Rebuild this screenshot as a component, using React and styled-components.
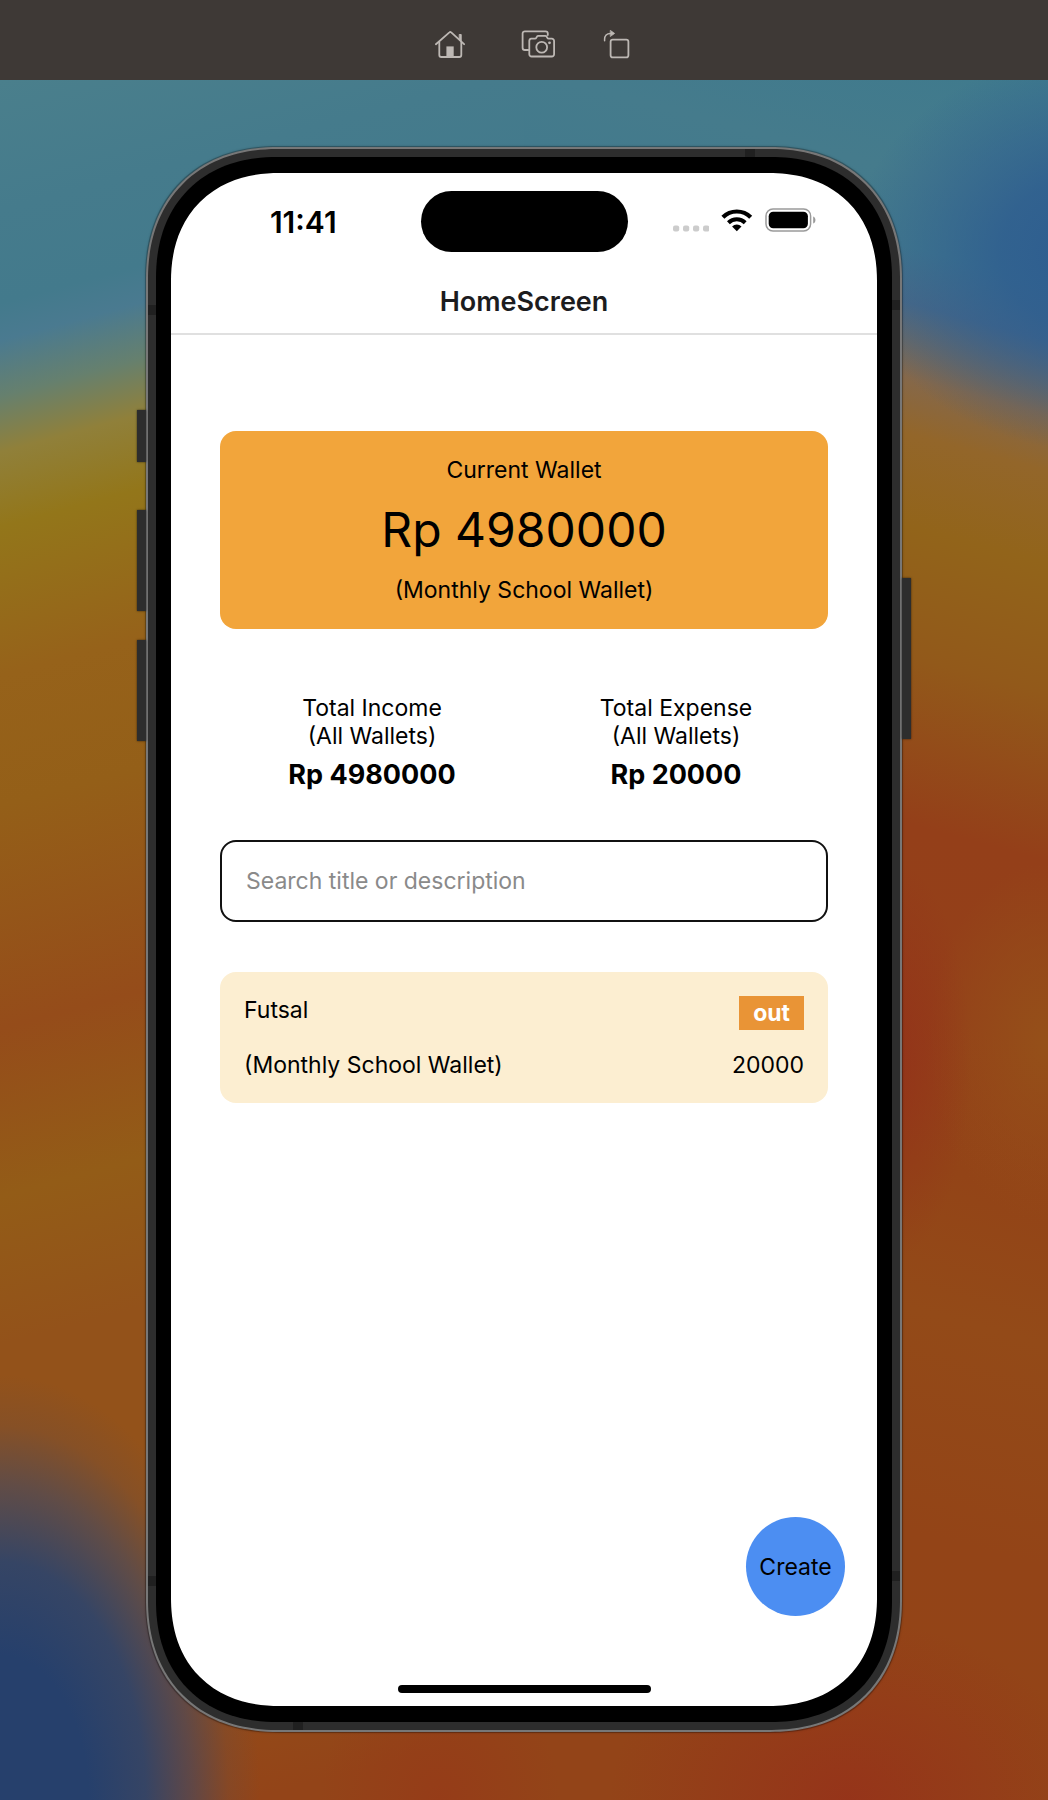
import React, { useState } from "react";
import styled, { createGlobalStyle } from "styled-components";

const GlobalStyle = createGlobalStyle`
  *, *::before, *::after { box-sizing: border-box; }
  body { margin: 0; background: #3e3936; }
  body, button, input { font-family: Inter, "Liberation Sans", Arial, sans-serif; }
`;

const Page = styled.div`
  min-height: 100vh;
  display: flex;
  flex-direction: column;
`;

/* ---------- simulator toolbar ---------- */

const Toolbar = styled.header`
  height: 80px;
  padding: 8px 0 0 10px;
  display: grid;
  grid-template-columns: 88px 88px 70px;
  justify-content: center;
  background: #3e3936;
`;

const ToolButton = styled.button`
  display: flex;
  align-items: center;
  justify-content: center;
  padding: 0;
  border: 0;
  background: none;
  color: #bdb8b4;
  cursor: pointer;
`;

/* ---------- desktop and device ---------- */

const Desktop = styled.main`
  flex: 1;
  display: flex;
  justify-content: center;
  align-items: flex-start;
  padding: 67px 24px;
  background:
    radial-gradient(ellipse 260px 425px at 0 100%, #26406c 0%, #26406c 34%, #2f446aee 56%, #3f486499 74%, #6a4c4050 88%, #93501a00 100%),
    radial-gradient(ellipse 80px 200px at 85% 57%, #93301acc 0%, #93301a00 100%),
    radial-gradient(ellipse 240px 180px at 81% 100%, #96301acc 0%, #96301a00 100%),
    radial-gradient(ellipse 120px 140px at 42% 100%, #963a18cc 0%, #963a1800 100%),
    radial-gradient(ellipse 120px 180px at 100% 56%, #955019 0%, #95501900 100%),
    radial-gradient(ellipse 250px 200px at 105% 10%, #2d5c90 0%, #2d5c90cc 40%, #2d5c9000 100%),
    linear-gradient(165deg, #4a7f8c 0%, #457b8c 7%, #437a8c 12%, #4a7a90 14%, #66806e 17%, #90803a 20%, #93761a 24%, #96621a 32%, #945f18 39%, #954c1a 51%, #935c17 60%, #93521a 68%, #93521a 84%, #934418 96%) left / 50% 100% no-repeat,
    linear-gradient(195deg, #3f7a8d 0%, #457b8c 7%, #437a8c 11%, #4a6a86 14%, #85684a 18%, #93662a 21%, #92641a 26%, #92591a 33%, #943f19 42%, #944019 52%, #934417 60%, #934a18 68%, #934417 80%, #934418 96%) right / 50% 100% no-repeat,
    #935018;
`;

const Device = styled.div`
  position: relative;
  width: 100%;
  max-width: 756px;
  padding: 8px;
  border: 2px solid #777;
  border-radius: 120px;
  background: #2d2d2d;
  box-shadow: 0 0 0 1px rgba(0, 0, 0, 0.2), 0 0 3px rgba(0, 0, 0, 0.4);
  @supports (corner-shape: squircle) {
    corner-shape: superellipse(1.15);
    border-radius: 132px;
  }
`;

const Bezel = styled.div`
  padding: 16px 15px;
  border-radius: 110px;
  background: #000;
  @supports (corner-shape: squircle) {
    corner-shape: superellipse(1.15);
    border-radius: 121px;
  }
`;

const SideKey = styled.span`
  position: absolute;
  top: ${(p) => p.$top}px;
  ${(p) => p.$side}: -11px;
  width: 9px;
  height: ${(p) => p.$length}px;
  background: #2d2d2d;
  box-shadow: 0 0 2px rgba(0, 0, 0, 0.6);
`;

const SideBand = styled.span`
  position: absolute;
  top: ${(p) => p.$top}px;
  ${(p) => p.$side}: 0;
  width: 8px;
  height: 10px;
  background: #202020;
`;

const EndBand = styled.span`
  position: absolute;
  ${(p) => p.$edge}: 0;
  ${(p) => p.$side}: 145px;
  width: 10px;
  height: 8px;
  background: #202020;
`;

const Screen = styled.div`
  display: flex;
  flex-direction: column;
  aspect-ratio: 706 / 1533;
  border-radius: 96px;
  background: #fff;
  color: #000;
  @supports (corner-shape: squircle) {
    corner-shape: superellipse(1.15);
    border-radius: 108px;
  }
`;

const StatusBar = styled.div`
  display: grid;
  grid-template-columns: 1fr 207px 1fr;
  align-items: center;
  justify-items: center;
  padding: 18px 15px 0;
`;

const Clock = styled.time`
  font-size: 30px;
  line-height: 34px;
  font-weight: 600;
`;

const Island = styled.div`
  width: 100%;
  height: 61px;
  border-radius: 31px;
  background: #000;
`;

const Indicators = styled.div`
  display: flex;
  align-items: center;
  gap: 12px;
  padding-bottom: 4px;
`;

const NavBar = styled.header`
  padding: 33px 16px 14px;
  border-bottom: 2px solid #e0e0e0;
  text-align: center;
`;

const NavTitle = styled.h1`
  margin: 0;
  font-size: 27px;
  line-height: 34px;
  font-weight: 600;
  color: #1c1c1e;
`;

/* ---------- app content ---------- */

const Content = styled.div`
  flex: 1;
  display: flex;
  flex-direction: column;
  padding: 96px 49px 0;
`;

const Text = styled.p`
  margin: 0;
  font-size: 23px;
  line-height: 28px;
`;

const WalletCard = styled.section`
  display: flex;
  flex-direction: column;
  align-items: center;
  gap: 17px;
  padding: 25px 24px;
  border-radius: 16px;
  background: #f2a53b;
`;

const Balance = styled.p`
  margin: 0;
  font-size: 48px;
  line-height: 58px;
`;

const Totals = styled.section`
  display: grid;
  grid-template-columns: 1fr 1fr;
  margin-top: 65px;
  text-align: center;
`;

const TotalAmount = styled.p`
  margin: 8px 0 0;
  font-size: 27px;
  line-height: 34px;
  font-weight: 700;
`;

const SearchField = styled.input`
  width: 100%;
  height: 82px;
  margin: 48px 0 50px;
  padding: 0 24px;
  border: 2px solid #111;
  border-radius: 16px;
  background: #fff;
  font-size: 23px;
  line-height: 28px;
  &::placeholder { color: #8a8a8a; opacity: 1; }
`;

const Entry = styled.article`
  display: flex;
  flex-direction: column;
  gap: 21px;
  padding: 24px;
  border-radius: 16px;
  background: #fceed1;
`;

const EntryRow = styled.div`
  display: flex;
  align-items: flex-start;
  justify-content: space-between;
`;

const Badge = styled.span`
  padding: 3px 14px;
  background: #e99436;
  color: #fff;
  font-size: 23px;
  line-height: 28px;
  font-weight: 700;
`;

const ScreenFooter = styled.footer`
  display: flex;
  flex-direction: column;
  align-items: center;
  gap: 69px;
  padding: 0 32px 13px;
`;

const CreateButton = styled.button`
  align-self: flex-end;
  width: 99px;
  height: 99px;
  padding: 0;
  border: 0;
  border-radius: 50%;
  background: #4c8ef2;
  color: #000;
  font-size: 23px;
  line-height: 28px;
  cursor: pointer;
`;

const HomeIndicator = styled.div`
  width: 253px;
  height: 8px;
  border-radius: 4px;
  background: #000;
`;

/* ---------- icons ---------- */

const HomeIcon = () => (
  <svg width="30" height="27" viewBox="0 0 30 27" fill="none" stroke="currentColor" strokeWidth="1.8" strokeLinecap="round" strokeLinejoin="round" aria-hidden="true">
    <path d="M.9 13.2 14.4 1.4a1.3 1.3 0 0 1 1.8 0L29.1 13.2" />
    <path d="M4.3 11v13a2 2 0 0 0 2 2h18a2 2 0 0 0 2-2V11" />
    <path d="M24.6 3.5h1.6v7l-1.6-1.6z" fill="currentColor" strokeWidth="1" />
    <path d="M11.4 15.4h7.3V26h-7.3z" fill="currentColor" stroke="none" />
  </svg>
);

const ScreenshotIcon = () => (
  <svg width="34" height="28" viewBox="0 0 34 28" fill="none" stroke="currentColor" strokeWidth="1.8" strokeLinecap="round" strokeLinejoin="round" aria-hidden="true">
    <path d="M7.4 20H3.9a2.3 2.3 0 0 1-2.3-2.3V3.6a2.3 2.3 0 0 1 2.3-2.3h20.6a2.3 2.3 0 0 1 2.3 2.3V5" />
    <path d="M10.3 8.6h3.6c.8 0 1.2-.4 1.5-1l.5-.9c.3-.6.8-.9 1.5-.9h6.8c.7 0 1.2.3 1.5.9l.5.9c.3.6.7 1 1.5 1h3.1a2.3 2.3 0 0 1 2.3 2.3v13.3a2.3 2.3 0 0 1-2.3 2.3H10.6a2.3 2.3 0 0 1-2.3-2.3V10.9a2.3 2.3 0 0 1 2-2.3z" />
    <circle cx="20.7" cy="17.2" r="5.4" />
    <circle cx="28.5" cy="12.8" r="1.4" fill="currentColor" stroke="none" />
  </svg>
);

const RotateIcon = () => (
  <svg width="28" height="29" viewBox="0 0 28 29" fill="none" stroke="currentColor" strokeWidth="1.8" strokeLinecap="round" strokeLinejoin="round" aria-hidden="true">
    <rect x="7.6" y="9.6" width="17.8" height="17.8" rx="2.2" />
    <path d="M1.6 10.8V9.2c0-3.4 2.2-5.8 5.7-5.8h.8" strokeWidth="1.5" />
    <path d="M7.6.6 11.6 3.4 7.6 6.3z" fill="currentColor" strokeWidth=".8" />
  </svg>
);

const CellularDots = () => (
  <svg width="36" height="24" viewBox="0 0 36 24" fill="#ccc" role="img" aria-label="No signal">
    {[0, 10, 20, 30].map((x) => (
      <rect key={x} x={x} y="17.4" width="6.2" height="6.2" rx="2" />
    ))}
  </svg>
);

const WifiIcon = () => (
  <svg width="32" height="24" viewBox="0 0 32 24" fill="none" stroke="#000" role="img" aria-label="Wi-Fi">
    <path d="M1.9 9.3A19.6 19.6 0 0 1 29.7 9.3" strokeWidth="4.2" />
    <path d="M7.4 14.8A12 12 0 0 1 24.2 14.8" strokeWidth="4" />
    <path d="M15.8 23.2 11.1 18.5A6.8 6.8 0 0 1 20.5 18.5z" fill="#000" stroke="none" />
  </svg>
);

const BatteryIcon = () => (
  <svg width="51" height="24" viewBox="0 0 51 24" role="img" aria-label="Battery full">
    <rect x="1" y="1" width="44.6" height="22" rx="7" fill="none" stroke="#9a9a9a" strokeWidth="1.5" />
    <rect x="3.7" y="3.7" width="39.2" height="16.6" rx="4.5" fill="#000" />
    <path d="M48.2 8.4c3 1.2 3 6 0 7.2z" fill="#9a9a9a" />
  </svg>
);

/* ---------- screen ---------- */

const totals = [
  { label: "Total Income", amount: "Rp 4980000" },
  { label: "Total Expense", amount: "Rp 20000" },
];

const entries = [
  { title: "Futsal", wallet: "(Monthly School Wallet)", kind: "out", amount: "20000" },
];

export default function App() {
  const [query, setQuery] = useState("");
  const shown = entries.filter((e) =>
    e.title.toLowerCase().includes(query.toLowerCase())
  );

  return (
    <Page>
      <GlobalStyle />
      <Toolbar>
        <ToolButton type="button" aria-label="Home"><HomeIcon /></ToolButton>
        <ToolButton type="button" aria-label="Screenshot"><ScreenshotIcon /></ToolButton>
        <ToolButton type="button" aria-label="Rotate"><RotateIcon /></ToolButton>
      </Toolbar>
      <Desktop>
        <Device>
          <SideKey $side="left" $top={261} $length={52} />
          <SideKey $side="left" $top={361} $length={101} />
          <SideKey $side="left" $top={491} $length={101} />
          <SideKey $side="right" $top={429} $length={161} />
          <SideBand $side="left" $top={156} />
          <SideBand $side="left" $top={1427} />
          <SideBand $side="right" $top={151} />
          <SideBand $side="right" $top={1422} />
          <EndBand $edge="top" $side="right" />
          <EndBand $edge="bottom" $side="left" />
          <Bezel>
            <Screen>
              <StatusBar>
                <Clock>11:41</Clock>
                <Island />
                <Indicators>
                  <CellularDots />
                  <WifiIcon />
                  <BatteryIcon />
                </Indicators>
              </StatusBar>
              <NavBar>
                <NavTitle>HomeScreen</NavTitle>
              </NavBar>
              <Content>
                <WalletCard>
                  <Text>Current Wallet</Text>
                  <Balance>Rp 4980000</Balance>
                  <Text>(Monthly School Wallet)</Text>
                </WalletCard>
                <Totals>
                  {totals.map((t) => (
                    <div key={t.label}>
                      <Text>{t.label}</Text>
                      <Text>(All Wallets)</Text>
                      <TotalAmount>{t.amount}</TotalAmount>
                    </div>
                  ))}
                </Totals>
                <SearchField
                  type="text"
                  aria-label="Search title or description"
                  placeholder="Search title or description"
                  value={query}
                  onChange={(e) => setQuery(e.target.value)}
                />
                {shown.map((e) => (
                  <Entry key={e.title}>
                    <EntryRow>
                      <Text>{e.title}</Text>
                      <Badge>{e.kind}</Badge>
                    </EntryRow>
                    <EntryRow>
                      <Text>{e.wallet}</Text>
                      <Text>{e.amount}</Text>
                    </EntryRow>
                  </Entry>
                ))}
              </Content>
              <ScreenFooter>
                <CreateButton type="button">Create</CreateButton>
                <HomeIndicator />
              </ScreenFooter>
            </Screen>
          </Bezel>
        </Device>
      </Desktop>
    </Page>
  );
}
